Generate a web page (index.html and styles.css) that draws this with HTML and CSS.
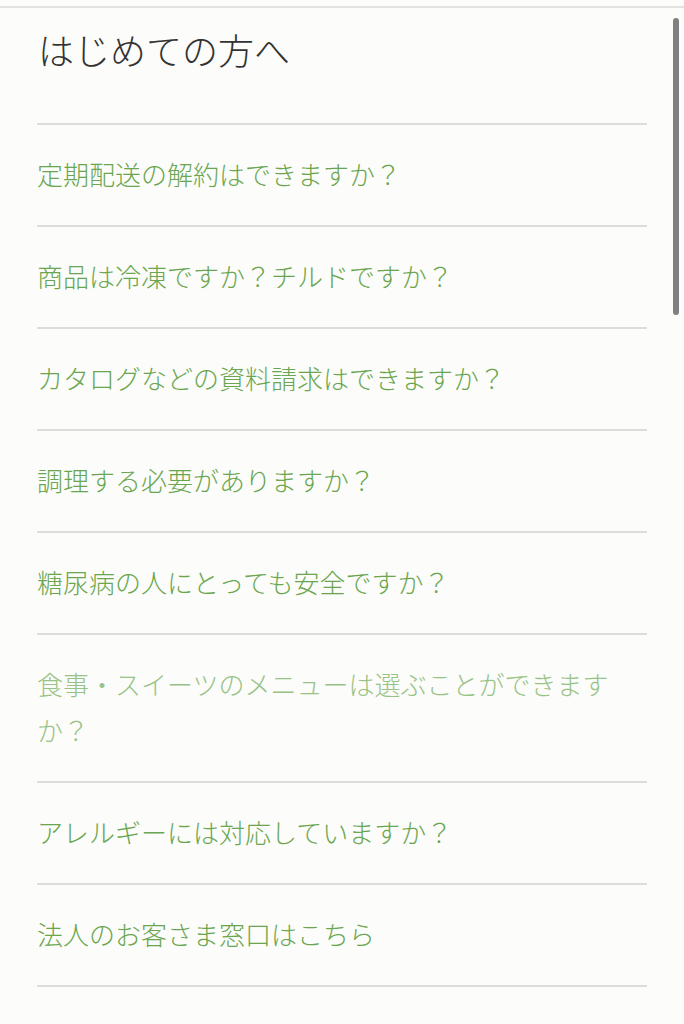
FILE: index.html
```html
<!DOCTYPE html>
<html lang="ja">
<head>
    <meta charset="UTF-8">
    <meta name="viewport" content="width=device-width, initial-scale=1.0">
    <title>はじめての方へ</title>
    <link rel="stylesheet" href="styles.css">
</head>
<body>
    <div class="page">
        <h2 class="title">はじめての方へ</h2>
        <ul class="faq">
            <li class="faq-item"><a href="#">定期配送の解約はできますか？</a></li>
            <li class="faq-item"><a href="#">商品は冷凍ですか？チルドですか？</a></li>
            <li class="faq-item"><a href="#">カタログなどの資料請求はできますか？</a></li>
            <li class="faq-item"><a href="#">調理する必要がありますか？</a></li>
            <li class="faq-item"><a href="#">糖尿病の人にとっても安全ですか？</a></li>
            <li class="faq-item"><a href="#" class="visited">食事・スイーツのメニューは選ぶことができますか？</a></li>
            <li class="faq-item"><a href="#">アレルギーには対応していますか？</a></li>
            <li class="faq-item"><a href="#">法人のお客さま窓口はこちら</a></li>
        </ul>
    </div>
    <div class="scrollbar"></div>
</body>
</html>
```

FILE: styles.css
```css
html, body{
    margin: 0;
    padding: 0;
    background-color: #fcfcfa;
}
body{
    font-family: "Noto Sans CJK JP", "Noto Sans", sans-serif;
    height: 1024px;
    overflow: hidden;
}
.page{
    margin-top: 6px;
    border-top: 2px solid #e2e2e0;
    padding: 0 37px;
}
.title{
    margin: 0;
    height: 117px;
    box-sizing: border-box;
    padding-top: 18px;
    padding-left: 1px;
    font-size: 36px;
    font-weight: 300;
    line-height: 46px;
    color: #333333;
    border-bottom: 2px solid #dcdcda;
}
.faq{
    list-style: none;
    margin: 0;
    padding: 0;
}
.faq-item{
    padding: 26px 0 28px;
    border-bottom: 2px solid #dcdcda;
    font-size: 26px;
    font-weight: 300;
    line-height: 46px;
}
.faq-item a{
    color: #6aa64f;
    text-decoration: none;
}
.faq-item a.visited{
    color: #98c386;
}
.scrollbar{
    position: absolute;
    top: 18px;
    left: 673px;
    width: 6px;
    height: 297px;
    border-radius: 3px;
    background-color: #808080;
}
```
